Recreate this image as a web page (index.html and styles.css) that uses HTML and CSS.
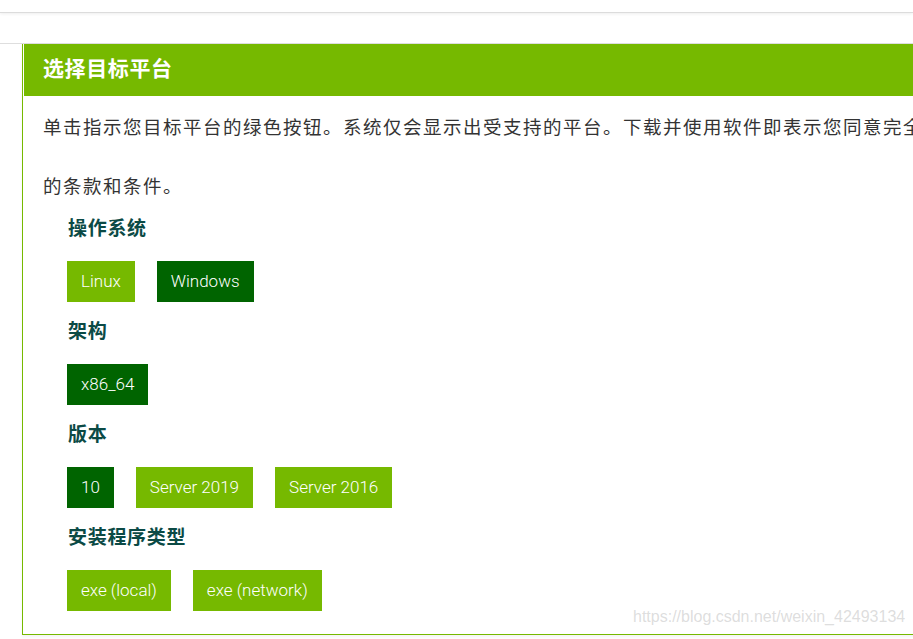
FILE: index.html
```html
<!DOCTYPE html>
<html lang="zh-CN">
<head>
<meta charset="utf-8">
<title>选择目标平台</title>
<link rel="stylesheet" href="styles.css">
</head>
<body>
<div class="topbar"></div>
<div class="subbar"></div>
<section class="card">
  <h2 class="card-title">选择目标平台</h2>
  <div class="card-body">
    <p class="intro">
      <span class="line">单击指示您目标平台的绿色按钮。系统仅会显示出受支持的平台。下载并使用软件即表示您同意完全遵守</span>
      <span class="line">的条款和条件。</span>
    </p>
    <div class="group">
      <h3 class="group-title">操作系统</h3>
      <div class="options">
        <span class="opt">Linux</span>
        <span class="opt active">Windows</span>
      </div>
    </div>
    <div class="group">
      <h3 class="group-title">架构</h3>
      <div class="options">
        <span class="opt active">x86_64</span>
      </div>
    </div>
    <div class="group">
      <h3 class="group-title">版本</h3>
      <div class="options">
        <span class="opt active">10</span>
        <span class="opt">Server 2019</span>
        <span class="opt">Server 2016</span>
      </div>
    </div>
    <div class="group">
      <h3 class="group-title">安装程序类型</h3>
      <div class="options">
        <span class="opt">exe (local)</span>
        <span class="opt">exe (network)</span>
      </div>
    </div>
  </div>
  <div class="watermark">https://blog.csdn.net/weixin_42493134</div>
</section>
</body>
</html>
```
FILE: styles.css
```css
html, body {
  margin: 0;
  padding: 0;
  background: #fff;
  overflow: hidden;
  width: 913px;
  height: 639px;
}
body {
  font-family: "Noto Sans CJK SC", "Noto Sans", sans-serif;
}
.topbar {
  height: 12px;
  border-bottom: 1px solid #dcdcdc;
  box-shadow: 0 1px 3px rgba(0, 0, 0, 0.07);
}
.subbar {
  height: 30px;
  border-bottom: 1px solid #dedede;
}
.card {
  position: relative;
  margin-left: 22px;
  width: 1100px;
  border-left: 1px solid #76b900;
  border-bottom: 1px solid #76b900;
  box-shadow: 0 2px 3px rgba(0, 0, 0, 0.05);
}
.card-title {
  margin: 0 0 0 1px;
  height: 52px;
  line-height: 46px;
  background: #76b900;
  color: #fff;
  font-size: 21px;
  font-weight: 700;
  padding-left: 19px;
  letter-spacing: 0.6px;
}
.card-body {
  padding: 1px 0 23px 20px;
}
.intro {
  margin: 0;
  font-size: 18.5px;
  line-height: 59px;
  color: #333;
  letter-spacing: 1.5px;
}
.intro .line {
  display: block;
  white-space: nowrap;
}
.group {
  padding-left: 25px;
  margin-bottom: 16px;
}
.group:last-child {
  margin-bottom: 0;
}
.group-title {
  margin: 0 0 22px 0;
  font-size: 19px;
  line-height: 24px;
  font-weight: 700;
  color: #0b4a45;
  letter-spacing: 0.7px;
}
.options {
  display: flex;
  gap: 22px;
  margin-left: -1px;
}
.opt {
  display: inline-block;
  height: 41px;
  line-height: 41px;
  padding: 0 14px;
  background: #76b900;
  color: #fff;
  font-family: Roboto, "Noto Sans", sans-serif;
  font-weight: 300;
  font-size: 17px;
}
.opt.active {
  background: #006400;
}
.watermark {
  position: absolute;
  left: 610px;
  top: 564px;
  font-family: "Liberation Sans", Arial, sans-serif;
  font-size: 16px;
  color: rgba(180, 180, 180, 0.45);
  white-space: nowrap;
}
```
